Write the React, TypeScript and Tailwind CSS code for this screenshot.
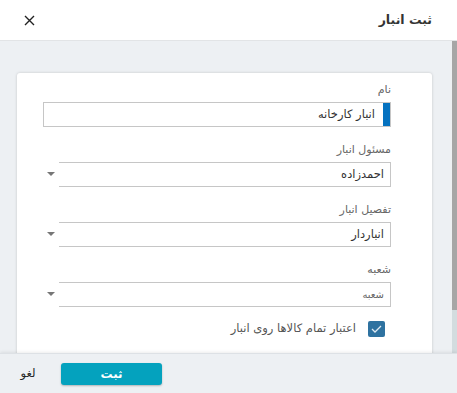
import React from 'react';

const font = { fontFamily: '"DejaVu Sans", "Noto Sans", sans-serif' };

const Caret = () => (
  <div className="w-[16px] flex items-center justify-center">
    <svg width="8" height="5" viewBox="0 0 8 5">
      <path d="M0 0 H8 L4 4 Z" fill="#777" />
    </svg>
  </div>
);

const SelectField = ({ label, value, placeholder }: { label: string; value: string; placeholder?: boolean }) => (
  <div className="mb-[14px]">
    <div className="h-[18px] leading-[18px] text-[11px] text-[#666]">{label}</div>
    <div className="mt-[3px] flex h-[25px]">
      <div className="flex-1 flex items-center border-y border-r border-[#c6c6c6] pr-[6px]">
        <span className={placeholder ? 'text-[10px] text-[#666]' : 'text-[11.5px] text-[#333]'}>{value}</span>
      </div>
      <Caret />
    </div>
  </div>
);

export default function App() {
  return (
    <div dir="rtl" style={font} className="w-[457px] h-[393px] flex flex-col bg-white overflow-hidden">
      <div className="h-[41px] shrink-0 flex items-center justify-between pr-[25px] pl-[24px] border-b border-[#e2e4e6] bg-white">
        <span className="text-[12.5px] font-bold text-[#333]">ثبت انبار</span>
        <svg width="11" height="11" viewBox="0 0 11 11">
          <path d="M1 1 L10 10 M10 1 L1 10" stroke="#222" strokeWidth="1.4" />
        </svg>
      </div>

      <div dir="ltr" className="flex-1 flex bg-[#edf0f3] overflow-hidden">
        <div className="flex-1 pt-[32px] pl-[17px] pr-[20px]">
          <div dir="rtl" className="h-[300px] bg-white rounded-[3px] shadow-[0_0_3px_rgba(0,0,0,0.18)] pt-[8px] pr-[41px] pl-[26px]">
            <div className="mb-[14px]">
              <div className="h-[18px] leading-[18px] text-[11px] text-[#666]">نام</div>
              <div className="mt-[3px] flex h-[25px] border border-[#c6c6c6]">
                <div className="w-[7px] bg-[#0572c0]" />
                <div className="flex-1 flex items-center pr-[8px] text-[11.5px] text-[#333]">انبار کارخانه</div>
              </div>
            </div>
            <SelectField label="مسئول انبار" value="احمدزاده" />
            <SelectField label="تفصیل انبار" value="انباردار" />
            <SelectField label="شعبه" value="شعبه" placeholder />
            <div className="flex items-center h-[16px] pr-[6px] gap-[12px]">
              <div className="w-[17px] h-[16px] rounded-[2px] bg-[#2e72a0] flex items-center justify-center">
                <svg width="11" height="8" viewBox="0 0 11 8">
                  <path d="M1 4 L4 7 L10 1" stroke="#dfeaf2" strokeWidth="1.3" fill="none" />
                </svg>
              </div>
              <span className="text-[11.5px] text-[#555]">اعتبار تمام کالاها روی انبار</span>
            </div>
          </div>
        </div>
        <div className="w-[5px] flex flex-col">
          <div className="h-[269px] bg-[#a6a6a6]" />
          <div className="flex-1 bg-[#d3dcdf]" />
        </div>
      </div>

      <div dir="ltr" className="h-[40px] shrink-0 flex items-center pl-[14px] bg-[#edf0f3] border-t border-[#dde1e5] shadow-[0_-1px_3px_rgba(0,0,0,0.08)] relative">
        <span className="w-[28px] text-center text-[11.5px] text-[#222]">لغو</span>
        <button className="ml-[19px] w-[101px] h-[22px] rounded-[3px] bg-[#04a2be] text-white text-[12px] font-bold shadow-[0_1px_2px_rgba(0,0,0,0.25)]">
          ثبت
        </button>
      </div>
    </div>
  );
}
